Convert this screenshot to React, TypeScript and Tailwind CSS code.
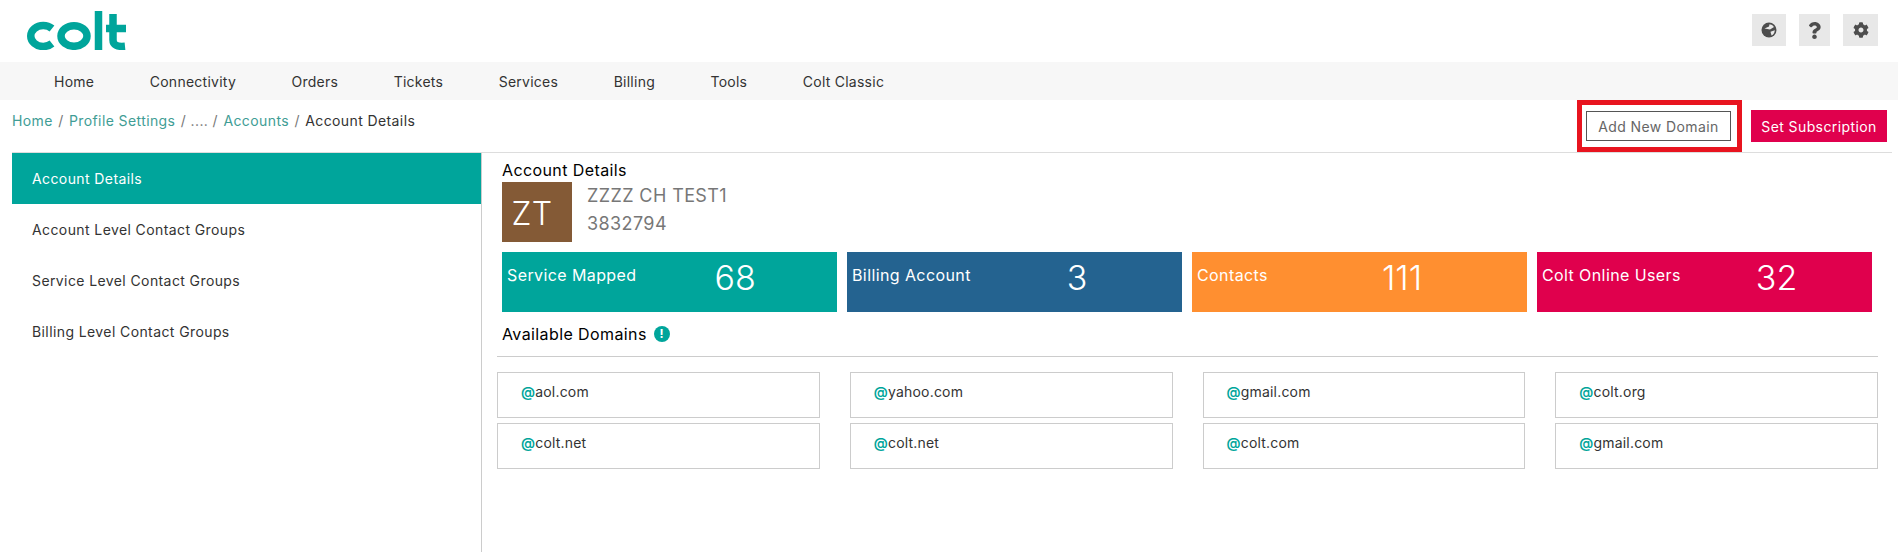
import React from "react";
import { FaCog, FaQuestion } from "react-icons/fa";

const navItems = ["Home", "Connectivity", "Orders", "Tickets", "Services", "Billing", "Tools", "Colt Classic"];

const sideItems = ["Account Details", "Account Level Contact Groups", "Service Level Contact Groups", "Billing Level Contact Groups"];

const stats = [
  { label: "Service Mapped", value: "68", bg: "bg-[#00a59b]", gap: "gap-[78px]" },
  { label: "Billing Account", value: "3", bg: "bg-[#246390]", gap: "gap-[96px]" },
  { label: "Contacts", value: "111", bg: "bg-[#ff8f30]", gap: "gap-[114px]" },
  { label: "Colt Online Users", value: "32", bg: "bg-[#e0004d]", gap: "gap-[75px]" },
];

const domains = ["aol.com", "yahoo.com", "gmail.com", "colt.org", "colt.net", "colt.net", "colt.com", "gmail.com"];

function Logo() {
  return (
    <svg width="100" height="39" viewBox="0 0 100 39" fill="none" stroke="#00a59b" strokeWidth="7.500">
      <path d="M26 17.500A12.500 10.500 0 1 0 26 32.500" />
      <ellipse cx="48" cy="25" rx="13" ry="10.300" />
      <path d="M72.500 0v39" />
      <path d="M87 3v26c0 5 4 7 12 6.200M80 17.500h20" />
    </svg>
  );
}

function Header() {
  return (
    <div className="h-[62px] flex items-start justify-between">
      <div className="ml-[26px] mt-[11px]">
        <Logo />
      </div>
      <div className="flex mt-[14px] mr-[20px] gap-[13px] text-[#4d4d4d]">
        <div className="w-[34px] h-[32px] bg-[#e8e8e8] flex items-center justify-center">
          <svg width="16" height="16" viewBox="0 0 16 16">
            <circle cx="8" cy="8" r="7.500" fill="#4d4d4d" />
            <path d="M3.500 6.500L8 4.500l.5-2.200Q11.500 2.500 13 5L9 7.500z" fill="#e8e8e8" />
            <path d="M9.500 9.800L13.800 8.200Q13.500 12 10.500 13.500z" fill="#e8e8e8" />
          </svg>
        </div>
        <div className="w-[31px] h-[32px] bg-[#e8e8e8] flex items-center justify-center">
          <FaQuestion size={17} />
        </div>
        <div className="w-[35px] h-[32px] bg-[#e8e8e8] flex items-center justify-center">
          <FaCog size={16} />
        </div>
      </div>
    </div>
  );
}

export default function App() {
  return (
    <div className="h-[552px] bg-white overflow-hidden text-[14px] tracking-[0.4px] font-['Inter',sans-serif] text-[#333]">
      <Header />
      <nav className="h-[38px] bg-[#f7f7f7] flex items-center pl-[54px] gap-[55.500px] tracking-[0.25px]">
        {navItems.map((n) => (
          <a key={n} className="text-[#333]">{n}</a>
        ))}
      </nav>

      <div className="h-[53px] ml-[12px] mr-[6px] border-b border-[#ddd] flex justify-between items-start">
        <div className="mt-[10px] text-[#3f9d95]">
          Home <span className="text-[#777] mx-[1px]">/</span> Profile Settings <span className="text-[#777] mx-[1px]">/ .... /</span> Accounts <span className="text-[#777] mx-[1px]">/</span> <span className="text-[#333]">Account Details</span>
        </div>
        <div className="flex items-start">
          <div className="w-[165px] h-[52px] border-[5px] border-[#e8141f] pr-[2px] flex items-center justify-center">
            <button className="w-[145px] h-[30px] border border-[#555] text-[#666]">Add New Domain</button>
          </div>
          <button className="w-[136px] h-[32px] ml-[9px] mt-[10px] mr-[5px] bg-[#e0004d] text-white">Set Subscription</button>
        </div>
      </div>

      <div className="flex h-[399px] ml-[12px]">
        <aside className="w-[470px] border-r border-[#ccc] shrink-0">
          {sideItems.map((s, i) => (
            <div key={s} className={"h-[51px] pl-[20px] flex items-center " + (i === 0 ? "bg-[#00a59b] text-white" : "text-[#333]")}>{s}</div>
          ))}
        </aside>

        <main className="flex-1 pl-[15px]">
          <h2 className="ml-[5px] mt-[6px] h-[23px] text-[16px] leading-[23px] text-black">Account Details</h2>
          <div className="ml-[5px] flex h-[60px]">
            <div className="w-[70px] bg-[#845a36] text-white text-[32px] font-light pr-[10px] pt-[4px] flex items-center justify-center">ZT</div>
            <div className="ml-[15px] text-[18px] text-[#777] leading-[28px]">
              <div>ZZZZ CH TEST1</div>
              <div>3832794</div>
            </div>
          </div>
          <div className="ml-[5px] mt-[10px] flex gap-[10px]">
            {stats.map((s) => (
              <div key={s.label} className={"w-[335px] h-[60px] pl-[5px] flex text-white " + s.bg + " " + s.gap}>
                <span className="mt-[13px] leading-[20px] text-[16px] whitespace-nowrap">{s.label}</span>
                <span className="text-[34px] font-light tracking-normal leading-[50px] mt-[1px]">{s.value}</span>
              </div>
            ))}
          </div>
          <div className="ml-[5px] mt-[10px] h-[24px] flex items-center gap-[7px] text-[16px] text-black">
            Available Domains
            <span className="w-[16px] h-[16px] rounded-full bg-[#00a59b] text-white text-[12px] font-bold flex items-center justify-center">!</span>
          </div>
          <div className="mt-[10px] w-[1381px] border-t border-[#ccc]" />
          <div className="mt-[15px] w-[1381px] grid grid-cols-4 gap-x-[30px] gap-y-[5px]">
            {domains.map((d, i) => (
              <div key={i} className="h-[46px] border border-[#ccc] pl-[23px] pt-[9px] leading-[20px] tracking-[0.2px] text-[#333]">
                <span className="text-[#00a59b] font-semibold">@</span>{d}
              </div>
            ))}
          </div>
        </main>
      </div>
    </div>
  );
}
